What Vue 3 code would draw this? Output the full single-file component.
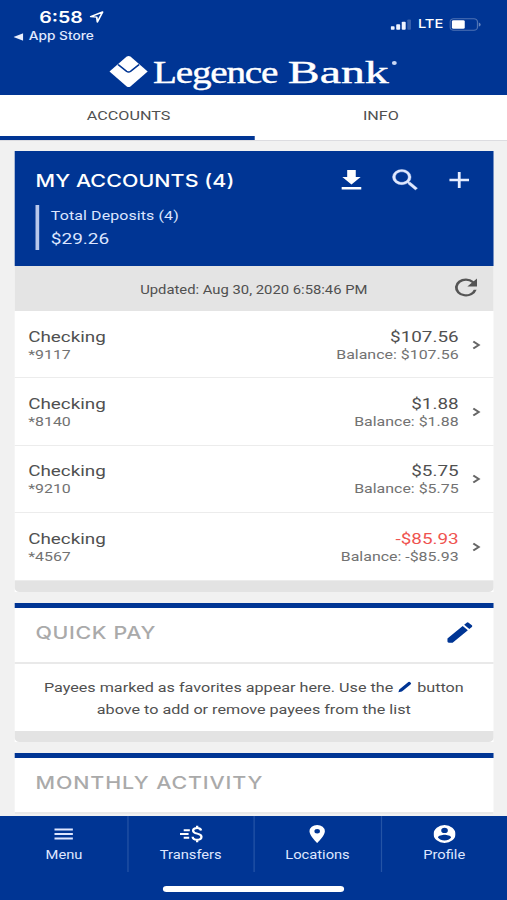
<script setup>
const accounts = [
  { name: 'Checking', number: '*9117', amount: '$107.56' },
  { name: 'Checking', number: '*8140', amount: '$1.88' },
  { name: 'Checking', number: '*9210', amount: '$5.75' },
  { name: 'Checking', number: '*4567', amount: '-$85.93', negative: true },
]
</script>

<template>
  <div class="screen">
    <header class="header">
      <div class="status">
        <div class="status-left">
          <div class="clock">
            <span>6:58</span>
            <svg width="12" height="12" viewBox="0 0 12 12"><path d="M1 5.6 10.8 1 6.5 11 6 6.1Z" fill="none" stroke="#fff" stroke-width="1.4" stroke-linejoin="round" /></svg>
          </div>
          <div class="back">
            <svg width="8" height="8" viewBox="0 0 8 8"><path d="M0 4 8 .3v7.4Z" fill="#e8efff" /></svg>
            <span>App Store</span>
          </div>
        </div>
        <div class="status-right">
          <svg width="17" height="11" viewBox="0 0 18 12" preserveAspectRatio="none" fill="#eef3ff">
            <rect x="0" y="7.8" width="3.4" height="4" rx=".8" />
            <rect x="4.8" y="5.8" width="3.4" height="6" rx=".8" />
            <rect x="9.6" y="3" width="3.4" height="8.8" rx=".8" />
            <rect x="14.4" y=".6" width="3.2" height="11.2" rx=".8" opacity=".22" />
          </svg>
          <span class="lte">LTE</span>
          <svg width="26" height="13" viewBox="0 0 26 13">
            <rect x=".5" y=".8" width="22.4" height="11.4" rx="3" fill="none" stroke="#fff" stroke-opacity=".3" />
            <rect x="2" y="2.3" width="10.5" height="8.4" rx="1.3" fill="#fff" />
            <path d="M24 4.4c2 .8 2 3.4 0 4.2Z" fill="#fff" opacity=".4" />
          </svg>
        </div>
      </div>
      <div class="brand">
        <svg class="mark" width="32" height="33" viewBox="0 0 32 33">
          <path d="M14.500 1.500Q16 .3 17.500 1.500L31.600 16.500 17.500 31.500Q16 32.700 14.500 31.500L.4 16.500Z" fill="#fff" />
          <path d="M7.400 9.500 14.300 16.300Q16 17.800 17.700 16.300L24.600 9.500" fill="none" stroke="#003594" stroke-width="1.500" />
        </svg>
        <span class="wordmark">Legence</span>
        <span class="wordmark wide">Bank</span>
        <i class="dot"></i>
      </div>
    </header>

    <nav class="tabs">
      <div class="tab active">ACCOUNTS</div>
      <div class="tab">INFO</div>
    </nav>

    <main class="content">
      <section class="card">
        <div class="summary">
          <div class="summary-top">
            <h1>MY ACCOUNTS (4)</h1>
            <div class="actions">
              <svg width="24" height="28" viewBox="0 0 24 28" fill="#fff"><path d="M8.500 4h7v7h4L12 18.500 4.500 11h4ZM4 21h16v2.400H4Z" /></svg>
              <svg width="28" height="28" viewBox="0 0 24 24" fill="#dfe8ff" stroke="#dfe8ff" stroke-width=".3"><path d="M15.500 14h-.79l-.28-.27A6.470 6.470 0 0 0 16 9.500 6.500 6.500 0 1 0 9.500 16c1.610 0 3.090-.59 4.230-1.570l.27.28v.79l5 4.990L20.490 19l-4.990-5zm-6 0C7.010 14 5 11.990 5 9.500S7.010 5 9.500 5 14 7.010 14 9.500 11.990 14 9.500 14z" /></svg>
              <svg width="24" height="28" viewBox="0 0 24 28" stroke="#e6edff" stroke-width="2.300"><path d="M4 14h16M12 6v16" /></svg>
            </div>
          </div>
          <div class="deposits">
            <div class="deposits-label">Total Deposits (4)</div>
            <div class="deposits-sum">$29.26</div>
          </div>
        </div>
        <div class="updated">
          <span>Updated: Aug 30, 2020 6:58:46 PM</span>
          <svg class="refresh" width="27" height="27" viewBox="0 0 24 24" fill="#555"><path d="M17.650 6.350A7.958 7.958 0 0 0 12 4a8 8 0 1 0 7.730 10h-2.080A6 6 0 1 1 12 6c1.660 0 3.140.69 4.220 1.780L13 11h7V4l-2.350 2.350z" /></svg>
        </div>
        <ul class="rows">
          <li v-for="a in accounts" :key="a.number" class="row">
            <div class="who">
              <div class="name">{{ a.name }}</div>
              <div class="sub">{{ a.number }}</div>
            </div>
            <div class="money">
              <div class="name" :class="{ negative: a.negative }">{{ a.amount }}</div>
              <div class="sub">Balance: {{ a.amount }}</div>
            </div>
            <svg class="chevron" width="8" height="10" viewBox="0 0 8 10"><path d="M1.500 1.500 6 5 1.500 8.500" fill="none" stroke="#666" stroke-width="1.700" /></svg>
          </li>
        </ul>
        <div class="foot"></div>
      </section>

      <section class="card titled">
        <div class="title-row">
          <h2>QUICK PAY</h2>
          <svg width="27" height="27" viewBox="0 0 24 24" fill="#003594"><path d="M3 17.250V20Q3 21 4 21h2.750L17.810 9.940l-3.750-3.750L3 17.250zM20.710 7.040a1 1 0 0 0 0-1.410l-2.340-2.340a1 1 0 0 0-1.410 0l-1.830 1.830 3.750 3.750 1.830-1.830z" /></svg>
        </div>
        <p class="hint">
          Payees marked as favorites appear here. Use the
          <svg width="11" height="12" viewBox="0 0 11 12"><path d="M.3 11.300 1 8.500 8 1.400Q9 .3 10.200 1.400T10.200 3.600L3.200 10.600Z" fill="#003594" /></svg>
          button<br />above to add or remove payees from the list
        </p>
        <div class="foot"></div>
      </section>

      <section class="card titled last">
        <div class="title-row"><h2 class="monthly">MONTHLY ACTIVITY</h2></div>
      </section>
    </main>

    <footer class="bottom">
      <div class="items">
        <div class="item">
          <svg width="18" height="18" viewBox="0 0 18 18" stroke="#dfe7ff" stroke-width="2"><path d="M1.500 4.500h15M1.500 9h15M1.500 13.500h15" /></svg>
          <span>Menu</span>
        </div>
        <div class="item">
          <svg width="20" height="18" viewBox="0 0 20 18" fill="none" stroke="#fff" stroke-width="1.900"><path d="M4 5.300h5M1 9h7M4 12.700h4.500M18.200 5.500C17.800 3.500 16.700 3 15 3c-2 0-3.300.9-3.300 2.700 0 4 6.800 2 6.800 6 0 2-1.300 3-3.500 3s-3.600-1-3.700-3M15 .7v2.300M15 15v2.300" /></svg>
          <span>Transfers</span>
        </div>
        <div class="item">
          <svg width="20" height="18" viewBox="1 2 22 20" fill="#fff"><path d="M12 2a7 7 0 0 0-7 7c0 5.250 7 13 7 13s7-7.750 7-13a7 7 0 0 0-7-7zm0 9.500a2.500 2.500 0 1 1 0-5 2.500 2.500 0 0 1 0 5z" /></svg>
          <span>Locations</span>
        </div>
        <div class="item">
          <svg width="18" height="18" viewBox="2 2 20 20" fill="#fff"><path d="M12 2a10 10 0 1 0 0 20 10 10 0 0 0 0-20zm0 3a3 3 0 1 1 0 6 3 3 0 0 1 0-6zm0 14.200a7.200 7.200 0 0 1-6-3.220c.03-1.990 4-3.080 6-3.080s5.970 1.090 6 3.080a7.200 7.200 0 0 1-6 3.220z" /></svg>
          <span>Profile</span>
        </div>
      </div>
      <div class="home"></div>
    </footer>
  </div>
</template>

<style>
body {
  margin: 0;
  overflow: hidden;
  background: #f1f1f1;
}
</style>

<style scoped>
* {
  box-sizing: border-box;
}
/* A 414-unit-wide phone canvas, widened to fill the 507px viewport. */
.screen {
  width: 414px;
  height: 900px;
  transform: scaleX(1.22464);
  transform-origin: 0 0;
  display: flex;
  flex-direction: column;
  overflow: hidden;
  background: #f1f1f1;
  color: #505050;
  font-family: Roboto, "Liberation Sans", sans-serif;
}
svg {
  display: block;
  flex: none;
}
.header {
  height: 95px;
  flex: none;
  background: #003594;
  color: #fff;
}
.status {
  height: 50px;
  display: flex;
  justify-content: space-between;
}
.status-left {
  padding: 7px 0 0 11px;
}
.clock {
  display: flex;
  align-items: center;
  gap: 5px;
  padding-left: 21px;
  height: 20px;
  font: 600 16px/20px Inter, sans-serif;
}
.back {
  display: flex;
  align-items: center;
  gap: 4.500px;
  height: 19px;
  font: 500 11.200px/19px Inter, sans-serif;
  color: #e0e9ff;
}
.status-right {
  display: flex;
  align-items: center;
  gap: 5px;
  height: 20px;
  margin: 14px 21px 0 0;
}
.lte {
  font: 500 12px/20px Inter, sans-serif;
}
.brand {
  display: flex;
  align-items: flex-start;
  padding: 5px 0 0 89px;
}
.wordmark {
  margin: -1px 0 0 4px;
  font: 400 32px/36px "Liberation Serif", serif;
  letter-spacing: -1px;
  white-space: nowrap;
  -webkit-text-stroke: 0.4px #fff;
}
.wordmark.wide {
  width: 82px;
  margin-left: 9px;
  letter-spacing: 0;
  transform: scaleX(1.22);
  transform-origin: 0 0;
}
.dot {
  width: 4px;
  height: 4px;
  margin: 6px 0 0 3px;
  border-radius: 50%;
  background: #cbd9f5;
}
.tabs {
  display: flex;
  flex: none;
  height: 46px;
  background: #fff;
  border-bottom: 1px solid #dcdce0;
}
.tab {
  flex: 1;
  text-align: center;
  font-size: 13.200px;
  line-height: 41px;
  border-bottom: 4px solid transparent;
}
.tab.active {
  padding-left: 2px;
  border-color: #003594;
}
.content {
  flex: 1;
  min-height: 0;
  padding: 10px 11.500px 3px 12px;
  overflow: hidden;
}
.card {
  margin-bottom: 11px;
  background: #fff;
}
.summary {
  height: 115px;
  padding: 15px 17px 0;
  background: #003594;
  color: #fff;
}
.summary-top {
  display: flex;
  justify-content: space-between;
  align-items: center;
  height: 30px;
}
h1,
h2 {
  margin: 0;
  font: 500 17.500px/30px Inter, sans-serif;
}
h1 {
  letter-spacing: 0.050px;
}
h2 {
  padding-top: 2px;
  color: #aaa;
  letter-spacing: 0.500px;
}
h2.monthly {
  letter-spacing: 0.700px;
}
.actions {
  display: flex;
  align-items: center;
  gap: 18px;
  margin-right: -1px;
  padding-bottom: 2px;
}
.deposits {
  height: 45px;
  margin-top: 9px;
  padding-left: 9.500px;
  border-left: 3px solid #b9c8ec;
  color: #dce5ff;
}
.deposits-label {
  font-size: 13px;
  line-height: 22px;
  letter-spacing: 0.1px;
}
.deposits-sum {
  font-size: 15.500px;
  line-height: 24px;
}
.updated {
  display: flex;
  align-items: center;
  justify-content: center;
  height: 45px;
  padding-top: 2px;
  background: #e4e4e4;
  font-size: 12.100px;
  position: relative;
}
.refresh {
  position: absolute;
  right: 9px;
  top: 8px;
}
.rows {
  margin: 0;
  padding: 0;
  list-style: none;
}
.row {
  display: flex;
  align-items: center;
  height: 67.400px;
  padding: 2px 10px 0 11px;
  border-bottom: 1.500px solid #ececec;
}
.money {
  margin-left: auto;
  margin-right: 10px;
  text-align: right;
}
.name {
  font-size: 15.400px;
  line-height: 18px;
}
.sub {
  font-size: 13px;
  line-height: 17px;
  color: #727272;
}
.negative {
  color: #ef5350;
}
.chevron {
  margin-bottom: 1px;
}
.foot {
  height: 11px;
  background: #e3e3e3;
  border-radius: 0 0 4px 4px;
}
.titled {
  border-top: 5px solid #003594;
}
.title-row {
  display: flex;
  align-items: center;
  justify-content: space-between;
  height: 56px;
  padding: 0 14px 5px 17px;
  border-bottom: 2px solid #e9e9e9;
}
.hint {
  height: 67px;
  margin: 0;
  padding-top: 13px;
  text-align: center;
  font-size: 13.200px;
  line-height: 22px;
}
.hint svg {
  display: inline-block;
  margin: 0 1px;
  vertical-align: -1px;
}
.bottom {
  flex: none;
  height: 84px;
  background: #003594;
  color: #dfe7ff;
}
.items {
  display: flex;
  height: 56px;
  padding-left: 1px;
}
.item {
  flex: 1;
  display: flex;
  flex-direction: column;
  align-items: center;
  padding-top: 9px;
  border-right: 1px solid #2454a6;
  font-size: 12px;
  line-height: 24px;
}
.item:last-child {
  border-right: 0;
}
.home {
  width: 148px;
  height: 6px;
  margin: 14px auto 0;
  border-radius: 3px;
  background: #fff;
}
</style>
